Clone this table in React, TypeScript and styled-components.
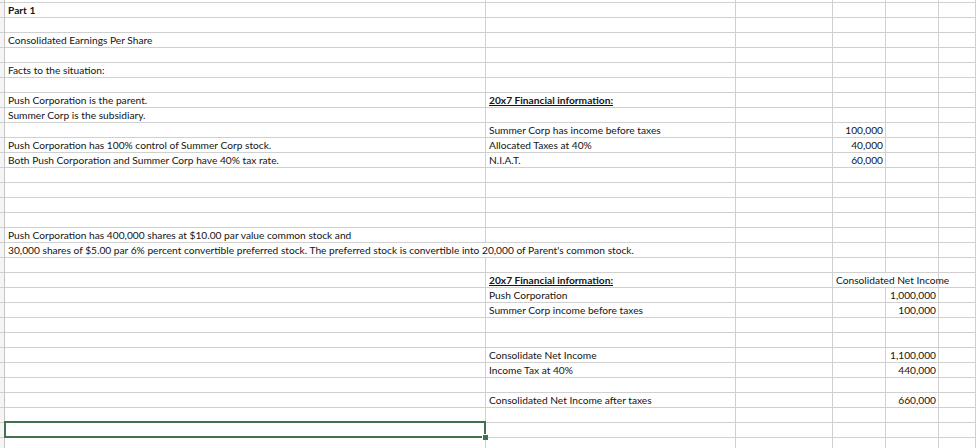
import styled, { createGlobalStyle } from 'styled-components';

const GlobalStyle = createGlobalStyle`
  html, body {
    margin: 0;
    padding: 0;
    background: #fff;
    overflow: hidden;
  }
`;

const GRID = '#d0d0d0';
const COLS = '5px 481px 250px 97px 53px 53px 1fr';

const Sheet = styled.div`
  width: 976px;
  height: 448px;
  overflow: hidden;
  font-family: Lato, 'Liberation Sans', sans-serif;
  font-size: 10.2px;
  color: #141414;
`;

const Row = styled.div<{ $h?: number }>`
  display: grid;
  grid-template-columns: ${COLS};
  height: ${(p) => p.$h ?? 15}px;
`;

const RowHead = styled.div`
  background: #f5f5f5;
  border-right: 1px solid #c4c4c4;
  border-bottom: 1px solid ${GRID};
`;

const Cell = styled.div<{
  $span?: number;
  $right?: boolean;
  $bold?: boolean;
  $underline?: boolean;
  $selected?: boolean;
}>`
  position: relative;
  grid-column: span ${(p) => p.$span ?? 1};
  border-right: 1px solid ${GRID};
  border-bottom: 1px solid ${GRID};
  padding: 0 2px 0 3px;
  line-height: 14px;
  white-space: nowrap;
  text-align: ${(p) => (p.$right ? 'right' : 'left')};
  font-weight: ${(p) => (p.$bold ? 700 : 400)};
  text-decoration: ${(p) => (p.$underline ? 'underline' : 'none')};

  ${(p) =>
    p.$selected &&
    `
    &::before {
      content: '';
      position: absolute;
      left: -1px;
      top: -2px;
      right: -1px;
      bottom: -1px;
      border: 2px solid #41724b;
      z-index: 2;
    }
    &::after {
      content: '';
      position: absolute;
      right: -3px;
      bottom: -3px;
      width: 5px;
      height: 5px;
      background: #41724b;
      border: 1px solid #fff;
      border-right: none;
      border-bottom: none;
      z-index: 3;
    }
  `}
`;

type Col = 'A' | 'B' | 'C' | 'D' | 'E' | 'F';
type CellSpec = {
  text?: string;
  span?: number;
  right?: boolean;
  bold?: boolean;
  underline?: boolean;
  selected?: boolean;
};
type RowSpec = Partial<Record<Col, CellSpec>>;

const COL_KEYS: Col[] = ['A', 'B', 'C', 'D', 'E', 'F'];
const heading = { bold: true, underline: true };

const rows: RowSpec[] = [
  { A: { text: 'Part 1', bold: true } },
  {},
  { A: { text: 'Consolidated Earnings Per Share' } },
  {},
  { A: { text: 'Facts to the situation:' } },
  {},
  {
    A: { text: 'Push Corporation is the parent.' },
    B: { text: '20x7 Financial information:', ...heading },
  },
  { A: { text: 'Summer Corp is the subsidiary.' } },
  {
    B: { text: 'Summer Corp has income before taxes' },
    D: { text: '100,000', right: true },
  },
  {
    A: { text: 'Push Corporation has 100% control of Summer Corp stock.' },
    B: { text: 'Allocated Taxes at 40%' },
    D: { text: '40,000', right: true },
  },
  {
    A: { text: 'Both Push Corporation and Summer Corp have 40% tax rate.' },
    B: { text: 'N.I.A.T.' },
    D: { text: '60,000', right: true },
  },
  {},
  {},
  {},
  {},
  { A: { text: 'Push Corporation has 400,000 shares at $10.00 par value common stock and' } },
  {
    A: {
      text: "30,000 shares of $5.00 par 6% percent convertible preferred stock. The preferred stock is convertible into 20,000 of Parent's common stock.",
      span: 2,
    },
  },
  {},
  {
    B: { text: '20x7 Financial information:', ...heading },
    D: { text: 'Consolidated Net Income', span: 2 },
  },
  {
    B: { text: 'Push Corporation' },
    E: { text: '1,000,000', right: true },
  },
  {
    B: { text: 'Summer Corp income before taxes' },
    E: { text: '100,000', right: true },
  },
  {},
  {},
  {
    B: { text: 'Consolidate Net Income' },
    E: { text: '1,100,000', right: true },
  },
  {
    B: { text: 'Income Tax at 40%' },
    E: { text: '440,000', right: true },
  },
  {},
  {
    B: { text: 'Consolidated Net Income after taxes' },
    E: { text: '660,000', right: true },
  },
  {},
  { A: { selected: true } },
  {},
];

const SheetRow = ({ spec }: { spec: RowSpec }) => {
  const cells = [];
  let skip = 0;
  for (const key of COL_KEYS) {
    if (skip > 0) {
      skip--;
      continue;
    }
    const c = spec[key] ?? {};
    if (c.span) skip = c.span - 1;
    cells.push(
      <Cell
        key={key}
        $span={c.span}
        $right={c.right}
        $bold={c.bold}
        $underline={c.underline}
        $selected={c.selected}
      >
        {c.text}
      </Cell>
    );
  }
  return (
    <Row>
      <RowHead />
      {cells}
    </Row>
  );
};

const App = () => {
  return (
    <>
      <GlobalStyle />
      <Sheet>
        {/* bit of the row above, scrolled off */}
        <Row $h={3}>
          <RowHead />
          {COL_KEYS.map((k) => (
            <Cell key={k} />
          ))}
        </Row>
        {rows.map((r, i) => (
          <SheetRow key={i} spec={r} />
        ))}
      </Sheet>
    </>
  );
};

export default App;
